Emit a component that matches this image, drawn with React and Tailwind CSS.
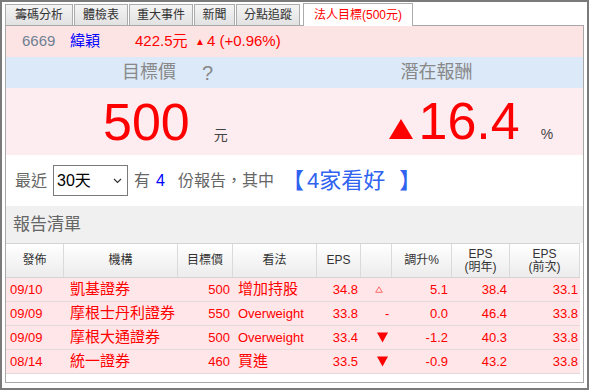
import React from "react";

const FONT = { fontFamily: "'Liberation Sans', 'Noto Sans CJK TC', sans-serif" };

const rows = [
  { d: "09/10", org: "凱基證券", tp: "500", view: "增加持股", eps: "34.8", icon: "up", chg: "5.1", n: "38.4", p: "33.1" },
  { d: "09/09", org: "摩根士丹利證券", tp: "550", view: "Overweight", eps: "33.8", icon: "flat", chg: "0.0", n: "46.4", p: "33.8" },
  { d: "09/09", org: "摩根大通證券", tp: "500", view: "Overweight", eps: "33.4", icon: "down", chg: "-1.2", n: "40.3", p: "33.8" },
  { d: "08/14", org: "統一證券", tp: "460", view: "買進", eps: "33.5", icon: "down", chg: "-0.9", n: "43.2", p: "33.8" },
];

const COLS = "grid grid-cols-[58px_114px_55px_84px_44px_31px_60px_58px_70px]";

function Tab({ label, w, active }) {
  if (active) {
    return (
      <div className={`${w} ml-[2px] h-[23px] -mb-px relative z-10 bg-white border border-b-0 border-[#acacac] flex items-center justify-center text-[12px] text-[#ff0000]`}>
        {label}
      </div>
    );
  }
  return (
    <div className={`${w} h-[21px] bg-linear-to-b from-[#f4f4f4] to-[#e2e2e2] border border-b-0 border-[#acacac] flex items-center justify-center text-[12px] text-[#333]`}>
      {label}
    </div>
  );
}

function Icon({ kind }) {
  if (kind === "up")
    return (
      <svg width="8" height="7" viewBox="0 0 8 7" className="ml-[14px]">
        <polygon points="4,0.8 7.3,6.3 0.7,6.3" fill="none" stroke="#ff6a6a" strokeWidth="1" />
      </svg>
    );
  if (kind === "flat") return <span className="ml-[24px] text-[13px] text-[#ff0000]">-</span>;
  return (
    <svg width="11" height="11" viewBox="0 0 11 11" className="ml-[16px]">
      <polygon points="0,0.5 11,0.5 5.5,10.5" fill="#ff0000" />
    </svg>
  );
}

export default function App() {
  return (
    <div style={FONT} className="w-[589px] h-[390px] border-2 border-[#7a7a7a] bg-white px-[3px] pb-[5px] flex flex-col">
      {/* tabs */}
      <div className="h-[23px] flex items-end gap-[1px]">
        <Tab label="籌碼分析" w="w-[68px]" />
        <Tab label="體檢表" w="w-[54px]" />
        <Tab label="重大事件" w="w-[64px]" />
        <Tab label="新聞" w="w-[41px]" />
        <Tab label="分點追蹤" w="w-[64px]" />
        <Tab label="法人目標(500元)" w="w-[110px]" active />
      </div>

      {/* panel */}
      <div className="flex-1 border border-[#a8a8a8] flex flex-col">
        {/* stock row */}
        <div className="h-[31px] bg-[#fde4e4] flex items-center pl-[16px] text-[15px]">
          <span className="w-[48px] text-[#6e7f92]">6669</span>
          <span className="w-[65px] text-[#0000ff]">緯穎</span>
          <span className="w-[60px] text-[#ff0000]">422.5元</span>
          <span className="text-[#ff0000] flex items-center">
            <span className="text-[10px] mr-[2px]">▲</span>4 (+0.96%)
          </span>
        </div>

        {/* header labels */}
        <div className="h-[31px] bg-[#dbe9f8] grid grid-cols-2 text-[18px] text-[#888]">
          <div className="flex items-center pl-[116px]">
            <span>目標價</span>
            <span className="ml-[26px] text-[20px]">?</span>
          </div>
          <div className="flex items-center pl-[106px]">潛在報酬</div>
        </div>

        {/* big numbers */}
        <div className="h-[67px] bg-[#feedf0] grid grid-cols-2">
          <div className="flex items-center pl-[97px]">
            <div className="flex items-baseline">
              <span className="text-[52px] leading-none text-[#ff0000]">500</span>
              <span className="ml-[24px] text-[14px] text-[#444]">元</span>
            </div>
          </div>
          <div className="flex items-center pl-[94px]">
            <div className="flex items-baseline">
              <svg width="24" height="20" viewBox="0 0 24 20" className="mb-[10px] mr-[6px]">
                <polygon points="12,0 24,20 0,20" fill="#ff0000" />
              </svg>
              <span className="text-[52px] leading-none text-[#ff0000]">16.4</span>
              <span className="ml-[21px] text-[14px] text-[#444]">%</span>
            </div>
          </div>
        </div>

        {/* filter row */}
        <div className="h-[51px] bg-white flex items-center pl-[9px] text-[16px] text-[#666]">
          <span>最近</span>
          <div className="ml-[6px] w-[75px] h-[31px] border border-[#7a7a7a] flex items-center justify-between pl-[3px] pr-[5px] text-black">
            <span>30天</span>
            <svg width="9" height="6" viewBox="0 0 9 6">
              <polyline points="1,1 4.5,4.5 8,1" fill="none" stroke="#333" strokeWidth="1.2" />
            </svg>
          </div>
          <span className="ml-[6px]">有</span>
          <span className="ml-[6px] text-[#0000ff]">4</span>
          <span className="ml-[13px]">份報告，其中</span>
          <span className="ml-[8px] text-[22px] text-[#2f63f0] flex items-center">
            <span>【</span>
            <span className="ml-[3px]">4家看好</span>
            <span className="ml-[14px]">】</span>
          </span>
        </div>

        {/* report list title */}
        <div className="h-[37px] bg-[#f0f0f0] flex items-center pl-[7px] text-[17px] text-[#666]">報告清單</div>

        {/* table */}
        <div className="w-[574px]">
          <div className={`${COLS} h-[35px] border-t border-b border-[#d4d4d4] bg-linear-to-b from-white to-[#ececec] text-[12px] text-[#333] leading-[13px]`}>
            {["發佈", "機構", "目標價", "看法", "EPS", "", "調升%", null, null].map((h, i) => (
              <div key={i} className="border-r border-[#dadada] flex flex-col items-center justify-center text-center">
                {i === 7 ? (<><span>EPS</span><span>(明年)</span></>) : i === 8 ? (<><span>EPS</span><span>(前次)</span></>) : h}
              </div>
            ))}
          </div>
          {rows.map((r, i) => (
            <div key={i} className={`${COLS} h-[24px] bg-[#ffe6e8] border-b border-[#e2dada] text-[#ff0000] text-[13px]`}>
              <div className="flex items-center pl-[4px]">{r.d}</div>
              <div className="flex items-center pl-[6px] text-[15px]">{r.org}</div>
              <div className="flex items-center justify-end pr-[3px]">{r.tp}</div>
              <div className={`flex items-center pl-[5px] ${/^[A-Za-z]/.test(r.view) ? "text-[13px]" : "text-[15px]"}`}>{r.view}</div>
              <div className="flex items-center justify-end pr-[3px]">{r.eps}</div>
              <div className="flex items-center">
                <Icon kind={r.icon} />
              </div>
              <div className="flex items-center justify-end pr-[4px]">{r.chg}</div>
              <div className="flex items-center justify-end pr-[3px]">{r.n}</div>
              <div className="flex items-center justify-end pr-[2px]">{r.p}</div>
            </div>
          ))}
        </div>
        <div className="flex-1 bg-white" />
      </div>
    </div>
  );
}
